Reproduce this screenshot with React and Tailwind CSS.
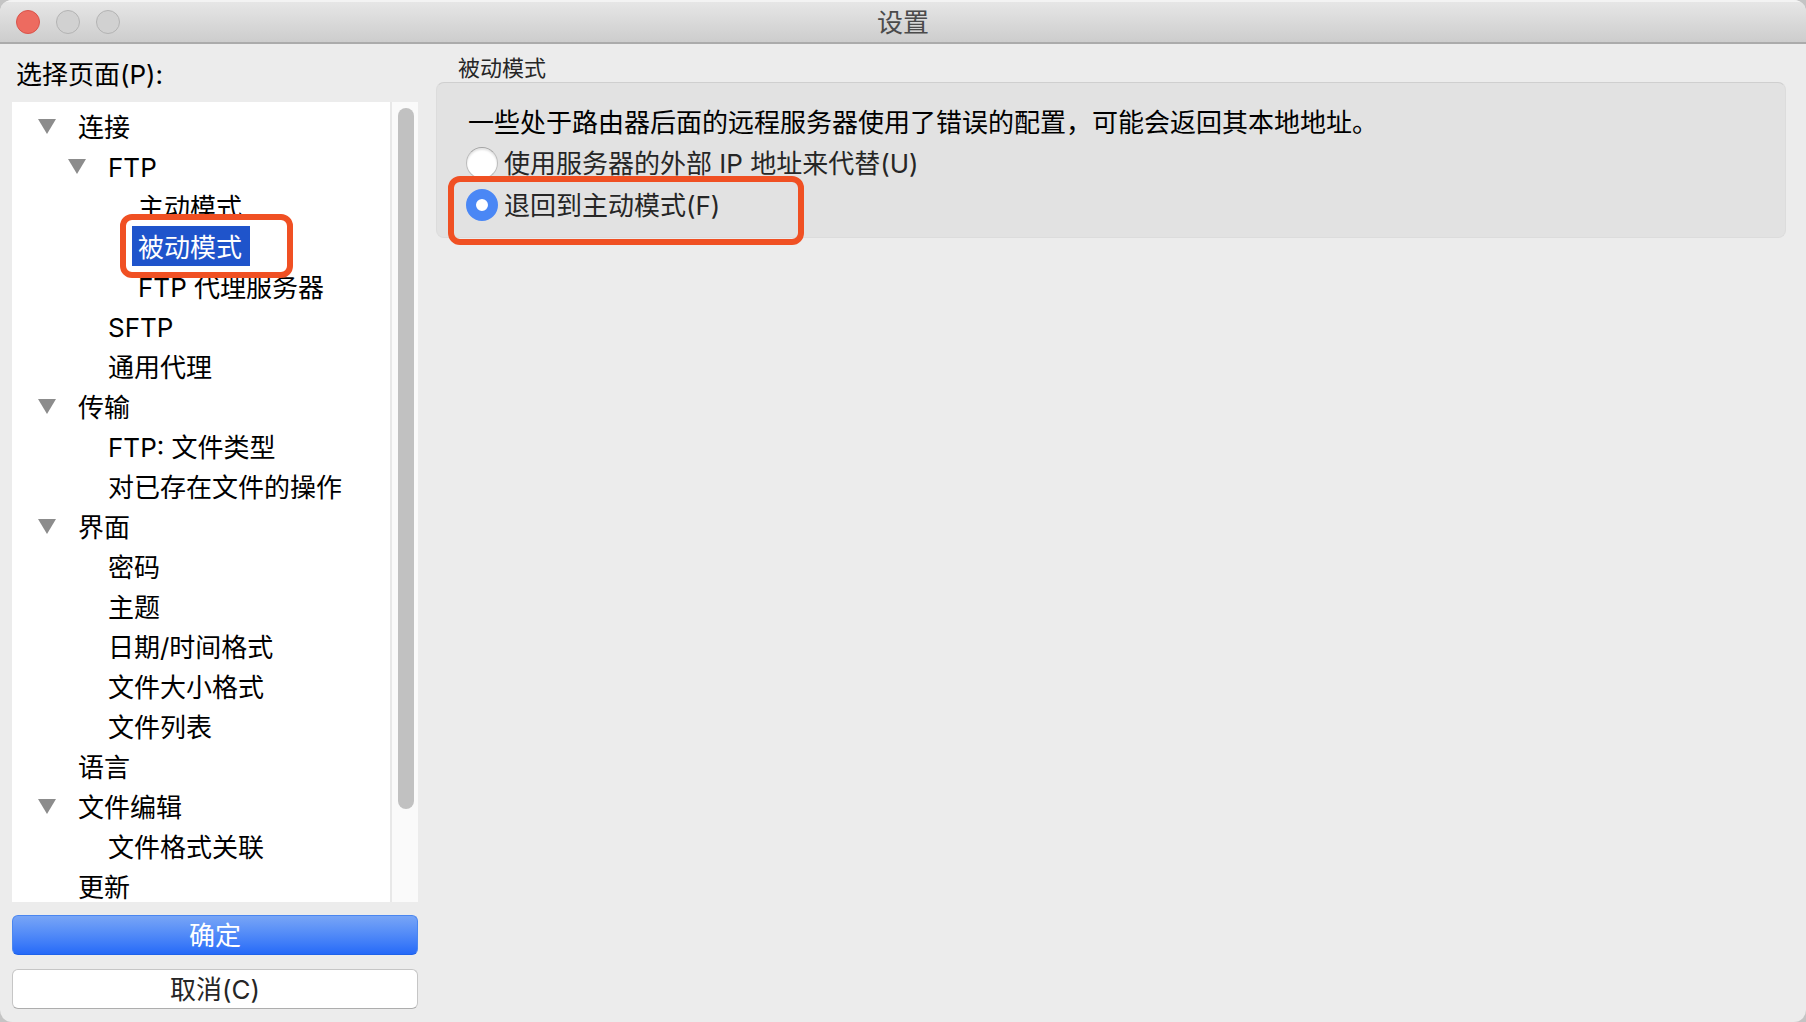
import { useState } from 'react'

const PAGES = [
  {
    label: '连接',
    children: [
      {
        label: 'FTP',
        children: [
          { label: '主动模式' },
          { label: '被动模式', marked: true },
          { label: 'FTP 代理服务器' },
        ],
      },
      { label: 'SFTP' },
      { label: '通用代理' },
    ],
  },
  {
    label: '传输',
    children: [{ label: 'FTP: 文件类型' }, { label: '对已存在文件的操作' }],
  },
  {
    label: '界面',
    children: [
      { label: '密码' },
      { label: '主题' },
      { label: '日期/时间格式' },
      { label: '文件大小格式' },
      { label: '文件列表' },
    ],
  },
  { label: '语言' },
  { label: '文件编辑', children: [{ label: '文件格式关联' }] },
  { label: '更新' },
]

const FALLBACKS = [
  { value: 'external', label: '使用服务器的外部 IP 地址来代替(U)' },
  { value: 'active', label: '退回到主动模式(F)', marked: true },
]

function TitleBar() {
  return (
    <header className="grid h-11 shrink-0 grid-cols-[1fr_auto_1fr] items-center border-t-2 border-b-2 border-t-[#f3f3f3] border-b-[#ababab] bg-linear-to-b from-[#e6e6e6] to-[#cdcdcd] px-4">
      <div className="flex gap-4">
        <button aria-label="关闭" className="size-6 rounded-full border border-[#d9534a] bg-[#ed6b60]" />
        <button aria-label="最小化" className="size-6 rounded-full border border-[#b3b3b3] bg-[#d1d1d1]" />
        <button aria-label="缩放" className="size-6 rounded-full border border-[#b3b3b3] bg-[#d1d1d1]" />
      </div>
      <h1 className="pt-[2px] text-[26px] leading-[38px] text-[#4b4b4b]">设置</h1>
    </header>
  )
}

function TreeNode({ node, selected, onSelect }) {
  const [open, setOpen] = useState(true)
  const active = selected === node.label

  return (
    <li role="treeitem" aria-selected={active} aria-expanded={node.children ? open : undefined}>
      <div className="flex h-10 items-center">
        <div className="flex w-[34px] shrink-0">
          {node.children && (
            <button aria-label={node.label} onClick={() => setOpen(!open)}>
              <svg viewBox="0 0 18 15" className="h-[15px] w-[18px] fill-[#8c8c8c]">
                <path d="M0 0h18L9 15z" />
              </svg>
            </button>
          )}
        </div>
        <div className="relative">
          <button
            onClick={() => onSelect(node.label)}
            className={`block h-10 pt-1 pr-2 pl-[6px] leading-9 whitespace-nowrap ${active ? 'bg-[#1f54cb] text-white' : 'text-black'}`}
          >
            {node.label}
          </button>
          {node.marked && (
            <span className="pointer-events-none absolute -inset-y-3 -right-[43px] -left-3 z-10 rounded-xl border-6 border-[#f05023]" />
          )}
        </div>
      </div>
      {node.children && open && (
        <ul role="group" className="pl-[30px]">
          {node.children.map(c => (
            <TreeNode key={c.label} node={c} selected={selected} onSelect={onSelect} />
          ))}
        </ul>
      )}
    </li>
  )
}

function Sidebar() {
  const [page, setPage] = useState('被动模式')

  return (
    <aside className="flex min-h-0 w-[406px] shrink-0 flex-col">
      <h2 id="pages-label" className="px-1 pt-[10px] pb-[6px] leading-[42px] text-black">选择页面(P):</h2>
      <div className="flex min-h-0 flex-1 bg-white">
        <ul role="tree" aria-labelledby="pages-label" className="flex-1 overflow-hidden py-1 pl-[26px]">
          {PAGES.map(p => (
            <TreeNode key={p.label} node={p} selected={page} onSelect={setPage} />
          ))}
        </ul>
        <div className="w-7 border-l-2 border-[#e8e8e8] bg-[#fafafa] px-[6px] py-[6px]">
          <div className="h-[89%] w-4 rounded-full bg-[#c1c1c1]" />
        </div>
      </div>
      <button className="mt-[13px] h-10 rounded-md border border-[#4a86f0] border-b-[#1f62ea] bg-linear-to-b from-[#78a5f6] to-[#266af8] pt-[2px] leading-9 text-white">
        确定
      </button>
      <button className="mt-[14px] h-10 rounded-md border border-[#c6c6c6] border-b-[#adadad] bg-white pt-[2px] leading-9 text-[#262626]">
        取消(C)
      </button>
    </aside>
  )
}

function PassiveModePanel() {
  const [fallback, setFallback] = useState('active')

  return (
    <main className="min-w-0 flex-1 pt-[10px]">
      <h2 id="group-label" className="pl-[22px] text-[22px] leading-7 text-[#262626]">被动模式</h2>
      <section
        aria-labelledby="group-label"
        className="rounded-lg border border-[#dcdcdc] border-t-[#cfcfcf] bg-[#e2e2e2] px-[29px] pt-5 pb-[10px]"
      >
        <p className="pl-[2px] leading-10 text-black">
          一些处于路由器后面的远程服务器使用了错误的配置，可能会返回其本地地址。
        </p>
        <div role="radiogroup" aria-labelledby="group-label" className="flex flex-col items-start">
          {FALLBACKS.map(f => (
            <div key={f.value} className="relative">
              <label className="flex h-[42px] items-center gap-[6px] leading-10 text-[#262626]">
                <input
                  type="radio"
                  name="fallback"
                  value={f.value}
                  checked={fallback === f.value}
                  onChange={() => setFallback(f.value)}
                  className="mb-[2px] size-8 shrink-0 appearance-none rounded-full border border-[#bdbdbd] border-t-[#a3a3a3] bg-white shadow-[inset_0_2px_2px_#e4e4e4] checked:border-[10px] checked:border-[#4a87f5] checked:shadow-none"
                />
                {f.label}
              </label>
              {f.marked && (
                <span className="pointer-events-none absolute -top-[9px] -right-[84px] -bottom-[18px] -left-[18px] z-10 rounded-xl border-6 border-[#f05023]" />
              )}
            </div>
          ))}
        </div>
      </section>
    </main>
  )
}

export default function App() {
  return (
    <div className="h-screen bg-[#c4c4c4]">
      <div className="flex h-full flex-col overflow-hidden rounded-xl bg-[#ececec] font-['Inter','Noto_Sans_CJK_SC',sans-serif] text-[26px]">
        <TitleBar />
        <div className="flex min-h-0 flex-1 gap-[18px] pr-5 pb-[13px] pl-3">
          <Sidebar />
          <PassiveModePanel />
        </div>
      </div>
    </div>
  )
}
